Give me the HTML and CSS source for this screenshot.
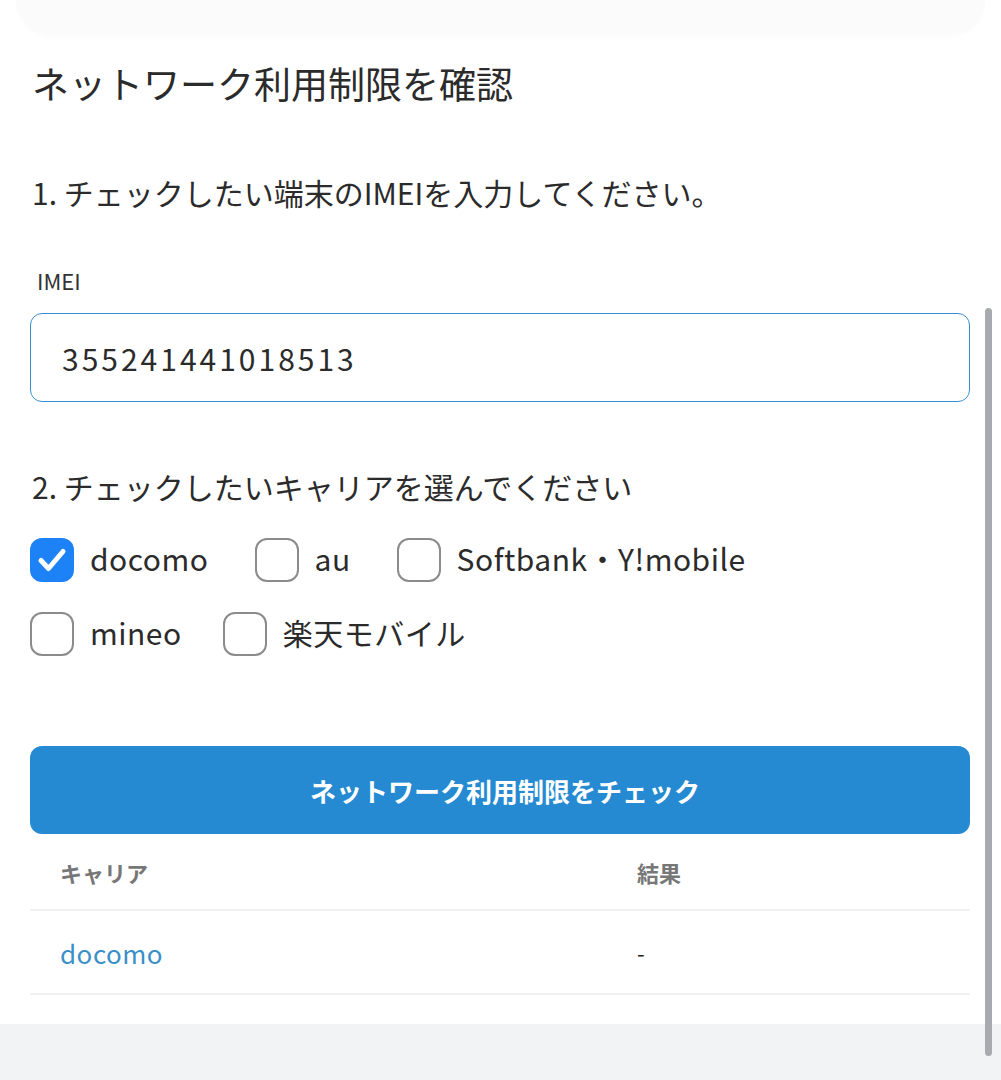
FILE: index.html
```html
<!DOCTYPE html>
<html lang="ja">
<head>
<meta charset="utf-8">
<title>ネットワーク利用制限を確認</title>
<link rel="stylesheet" href="styles.css">
</head>
<body>
<div class="topcard"></div>
<main class="content">
  <h1 class="title">ネットワーク利用制限を確認</h1>
  <p class="step step1">1. チェックしたい端末のIMEIを入力してください。</p>
  <label class="field-label" for="imei">IMEI</label>
  <div class="input-box" id="imei">355241441018513</div>
  <p class="step step2">2. チェックしたいキャリアを選んでください</p>
  <div class="carriers">
    <div class="carrier-row">
      <div class="option">
        <span class="box checked"><svg viewBox="0 0 44 44" width="44" height="44"><path d="M11 22.5 L18.5 30.5 L33 13.5" fill="none" stroke="#fff" stroke-width="5" stroke-linecap="round" stroke-linejoin="round"/></svg></span>
        <span class="opt-label">docomo</span>
      </div>
      <div class="option">
        <span class="box"></span>
        <span class="opt-label">au</span>
      </div>
      <div class="option">
        <span class="box"></span>
        <span class="opt-label">Softbank・Y!mobile</span>
      </div>
    </div>
    <div class="carrier-row row-two">
      <div class="option">
        <span class="box"></span>
        <span class="opt-label">mineo</span>
      </div>
      <div class="option">
        <span class="box"></span>
        <span class="opt-label">楽天モバイル</span>
      </div>
    </div>
  </div>
  <div class="check-btn">ネットワーク利用制限をチェック</div>
  <div class="results">
    <div class="res-row res-head">
      <span class="col-carrier">キャリア</span>
      <span class="col-result">結果</span>
    </div>
    <div class="res-row">
      <span class="col-carrier link">docomo</span>
      <span class="col-result">-</span>
    </div>
  </div>
</main>
<div class="footer"></div>
<div class="scrollbar"></div>
</body>
</html>
```
FILE: styles.css
```css
html, body {
  margin: 0;
  padding: 0;
  background: #ffffff;
}
body {
  font-family: "Noto Sans CJK JP", "Noto Sans", sans-serif;
  color: #2b2b2b;
  position: relative;
  height: 1080px;
  overflow: hidden;
}
.topcard {
  height: 35px;
  margin: 0 16px;
  background: #fbfbfb;
  border-radius: 0 0 36px 36px;
  box-shadow: 0 2px 5px rgba(0,0,0,0.015);
}
.content {
  padding: 0 31px 0 30px;
}
.title {
  margin: 23px 0 0 2px;
  font-size: 37px;
  line-height: 50px;
  font-weight: 400;
  color: #2b2b2b;
}
.step {
  margin: 0 0 0 2px;
  font-size: 30px;
  line-height: 44px;
  font-weight: 400;
}
.step1 {
  margin-top: 62px;
}
.field-label {
  display: block;
  margin: 51px 0 0 7px;
  font-size: 22px;
  line-height: 30px;
  color: #333;
}
.input-box {
  margin-top: 18px;
  box-sizing: border-box;
  height: 89px;
  border: 1.5px solid #3a8dcc;
  border-radius: 12px;
  padding: 0 0 0 31px;
  display: flex;
  align-items: center;
  font-size: 30px;
  letter-spacing: 3px;
  color: #2b2b2b;
}
.step2 {
  margin-top: 62px;
}
.carriers {
  margin-top: 30px;
  display: flex;
  flex-direction: column;
  gap: 30px;
}
.carrier-row {
  display: flex;
  gap: 46px;
  height: 44px;
}
.row-two {
  gap: 41px;
}
.option {
  display: flex;
  align-items: center;
  gap: 16px;
}
.box {
  width: 44px;
  height: 44px;
  box-sizing: border-box;
  border: 2px solid #8b8b8b;
  border-radius: 12px;
  display: block;
  flex: none;
}
.box.checked {
  border: none;
  background: #1d82f5;
}
.box svg {
  display: block;
}
.opt-label {
  font-size: 30px;
  line-height: 44px;
  letter-spacing: 0.5px;
  color: #2b2b2b;
  position: relative;
  top: -2px;
}
.check-btn {
  margin-top: 90px;
  height: 88px;
  background: #258ad1;
  border-radius: 12px;
  color: #ffffff;
  font-size: 26px;
  font-weight: 700;
  display: flex;
  align-items: center;
  justify-content: center;
  padding-left: 10px;
}
.results {
  display: flex;
  flex-direction: column;
}
.res-row {
  display: flex;
  align-items: center;
  height: 82px;
  border-bottom: 2px solid #f0f0f0;
  padding-left: 30px;
}
.res-head {
  height: 75px;
}
.col-carrier {
  width: 577px;
  flex: none;
}
.res-head span {
  font-size: 22px;
  font-weight: 700;
  color: #777;
}
.link {
  color: #3a8fc8;
  font-size: 26px;
  letter-spacing: 0.5px;
}
.col-result {
  font-size: 22px;
  color: #222;
}
.footer {
  position: absolute;
  left: 0;
  right: 0;
  top: 1024px;
  height: 56px;
  background: #f2f3f4;
}
.scrollbar {
  position: absolute;
  left: 985px;
  top: 308px;
  width: 7px;
  height: 748px;
  border-radius: 4px;
  background: #a9aaaf;
}
```
